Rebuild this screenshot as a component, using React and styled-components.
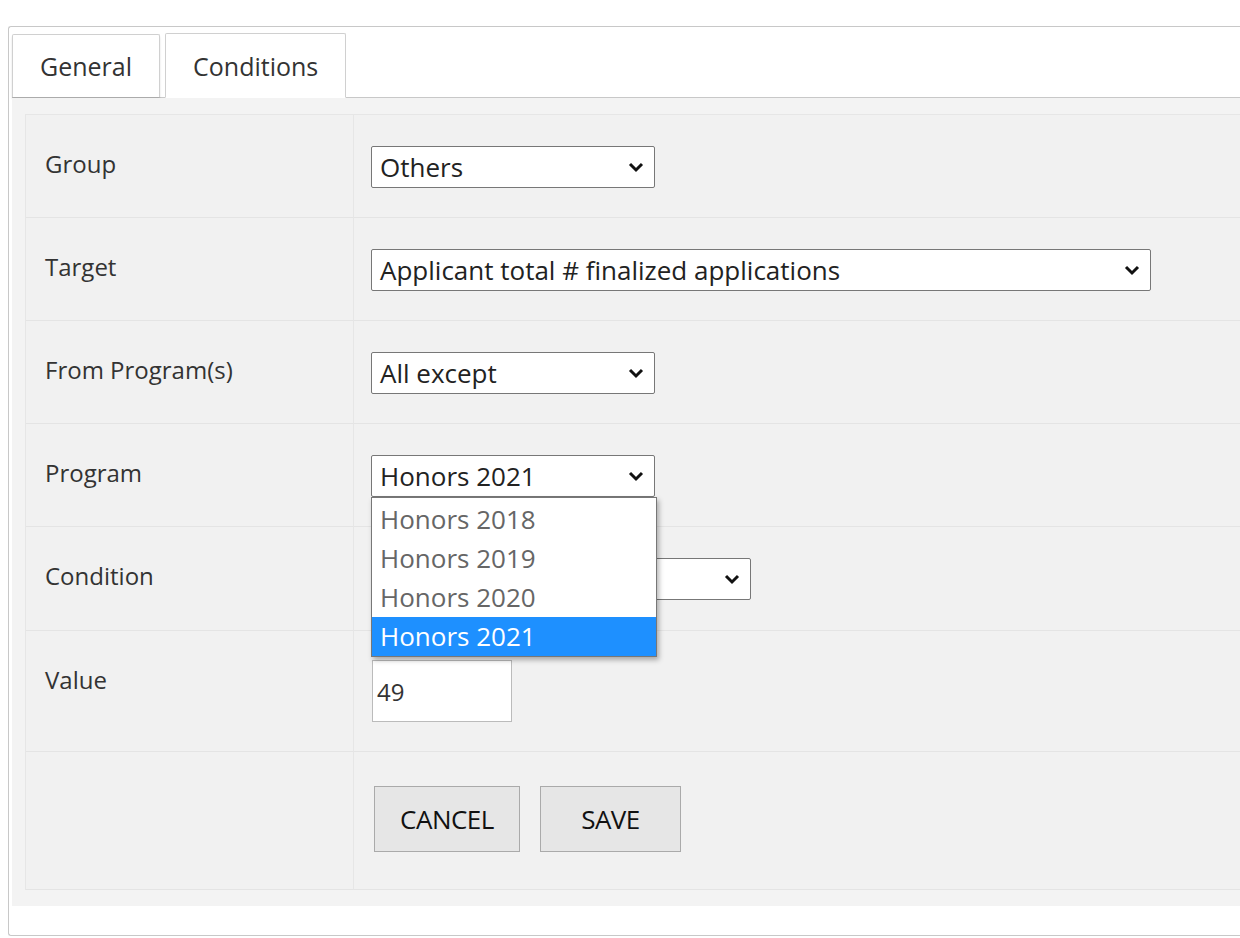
import React from "react";
import styled, { createGlobalStyle } from "styled-components";

const Global = createGlobalStyle`
  body { margin: 0; background: #fff; font-family: "Open Sans", sans-serif; color: #333; }
`;

const Frame = styled.div`
  margin: 26px 0 0 8px;
  height: 910px;
  border: 1px solid #c8c8c8;
  border-right: none;
  border-radius: 3px 0 0 3px;
  box-sizing: border-box;
  padding: 5px 0 0 3px;
  display: flex;
  flex-direction: column;
`;

const Tabs = styled.div`
  display: flex;
  gap: 5px;
  align-items: flex-end;
  border-bottom: 1px solid #c8c8c8;
  height: 65px;
`;

const Tab = styled.div`
  height: ${p => (p.$active ? "65px" : "63px")};
  box-sizing: border-box;
  padding: 0 27px;
  display: flex;
  align-items: center;
  font-size: 25px;
  color: #333;
  background: #fff;
  border: 1px solid #d0d0d0;
  border-bottom: ${p => (p.$active ? "1px solid #fff" : "none")};
  margin-bottom: ${p => (p.$active ? "-1px" : "0")};
  box-shadow: ${p => (p.$active ? "none" : "0 2px 2px rgba(0,0,0,0.15)")};
  border-radius: 2px 2px 0 0;
  align-self: flex-end;
`;

const Body = styled.div`
  background: #f3f3f3;
  padding: 16px 0 16px 13px;
`;

const Table = styled.div`
  display: grid;
  grid-template-columns: 328px 1fr;
  border-top: 1px solid #e6e6e6;
  border-left: 1px solid #e6e6e6;
  background: #f1f1f1;
`;

const Label = styled.div`
  height: ${p => p.$h}px;
  box-sizing: border-box;
  padding: 32px 0 0 19px;
  font-size: 24px;
  color: #333;
  border-right: 1px solid #e6e6e6;
  border-bottom: 1px solid #e4e4e4;
`;

const Cell = styled.div`
  height: ${p => p.$h}px;
  box-sizing: border-box;
  padding: ${p => p.$pt ?? 31}px 0 0 17px;
  border-bottom: 1px solid #e4e4e4;
  position: relative;
  display: flex;
  gap: 20px;
  align-items: flex-start;
`;

const Select = styled.div`
  width: ${p => p.$w}px;
  height: 42px;
  box-sizing: border-box;
  border: 1px solid #777;
  border-radius: 2px;
  background: #fff;
  display: flex;
  align-items: center;
  justify-content: space-between;
  padding: 0 10px 0 8px;
  font-size: 26px;
  color: #222;
`;

const Chevron = () => (
  <svg width="16" height="12" viewBox="0 0 16 12">
    <path d="M2 3 L8 9 L14 3" fill="none" stroke="#111" strokeWidth="3" />
  </svg>
);

const Input = styled.div`
  width: 140px;
  height: 62px;
  box-sizing: border-box;
  border: 1px solid #bbb;
  background: #fff;
  font-size: 24px;
  padding: 14px 4px;
  margin-left: 1px;
  margin-top: -2px;
`;

const List = styled.div`
  position: absolute;
  left: 17px;
  top: 73px;
  width: 284px;
  background: #fff;
  border: 1px solid #777;
  box-shadow: 2px 3px 5px rgba(0,0,0,0.3);
  z-index: 2;
  padding-top: 2px;
`;

const Option = styled.div`
  height: 39px;
  line-height: 39px;
  padding-left: 8px;
  font-size: 26px;
  color: ${p => (p.$sel ? "#fff" : "#666")};
  background: ${p => (p.$sel ? "#1e90ff" : "#fff")};
`;

const Button = styled.div`
  width: ${p => p.$w}px;
  height: 66px;
  box-sizing: border-box;
  border: 1px solid #aaa;
  background: #e6e6e6;
  display: flex;
  align-items: center;
  justify-content: center;
  font-size: 26px;
  letter-spacing: -0.5px;
  color: #111;
  margin-left: ${p => p.$ml ?? 0}px;
`;

export default function App() {
  return (
    <>
      <Global />
      <Frame>
        <Tabs>
          <Tab>General</Tab>
          <Tab $active>Conditions</Tab>
        </Tabs>
        <Body>
          <Table>
            <Label $h={103}>Group</Label>
            <Cell $h={103}><Select $w={284}>Others<Chevron /></Select></Cell>
            <Label $h={103}>Target</Label>
            <Cell $h={103}><Select $w={780}>Applicant total # finalized applications<Chevron /></Select></Cell>
            <Label $h={103}>From Program(s)</Label>
            <Cell $h={103}><Select $w={284}>All except<Chevron /></Select></Cell>
            <Label $h={103}>Program</Label>
            <Cell $h={103}>
              <Select $w={284}>Honors 2021<Chevron /></Select>
              <List>
                <Option>Honors 2018</Option>
                <Option>Honors 2019</Option>
                <Option>Honors 2020</Option>
                <Option $sel>Honors 2021</Option>
              </List>
            </Cell>
            <Label $h={104}>Condition</Label>
            <Cell $h={104}><Select $w={380}><span /><Chevron /></Select></Cell>
            <Label $h={121}>Value</Label>
            <Cell $h={121}><Input>49</Input></Cell>
            <Label $h={138} />
            <Cell $h={138} $pt={34}>
              <Button $w={146} $ml={3}>CANCEL</Button>
              <Button $w={141}>SAVE</Button>
            </Cell>
          </Table>
        </Body>
      </Frame>
    </>
  );
}
